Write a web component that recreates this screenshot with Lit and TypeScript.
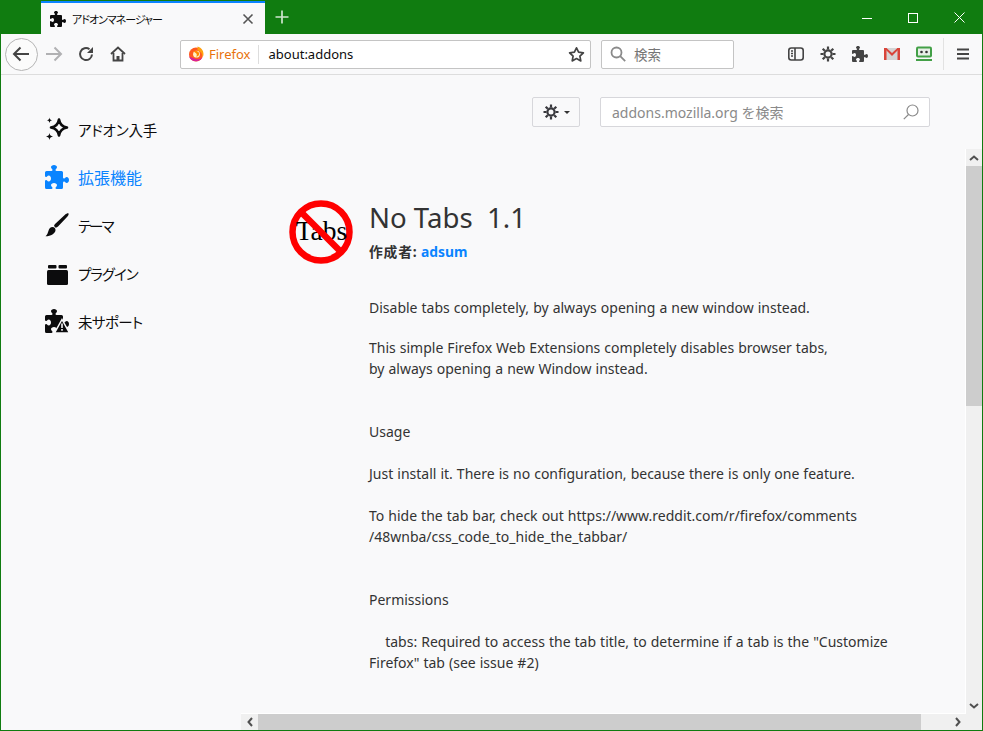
import {LitElement, html, css, svg} from 'lit';
import {customElement} from 'lit/decorators.js';

const PUZZLE =
  'M14.5 8c-.971 0-1 1-1.75 1a.765.765 0 0 1-.75-.75V5a1 1 0 0 0-1-1H7.75A.765.765 0 0 1 7 3.25c0-.75 1-.779 1-1.75C8 .635 7.1 0 6 0S4 .635 4 1.5c0 .971 1 1 1 1.75a.765.765 0 0 1-.75.75H1a1 1 0 0 0-1 1v2.25A.765.765 0 0 0 .75 8c.75 0 .779-1 1.75-1C3.365 7 4 7.9 4 9s-.635 2-1.5 2c-.971 0-1-1-1.75-1a.765.765 0 0 0-.75.75V15a1 1 0 0 0 1 1h3.25a.765.765 0 0 0 .75-.75c0-.75-1-.779-1-1.75C4 12.635 4.9 12 6 12s2 .635 2 1.5c0 .971-1 1-1 1.75a.765.765 0 0 0 .75.75H11a1 1 0 0 0 1-1v-3.25a.765.765 0 0 1 .75-.75c.75 0 .779 1 1.75 1 .865 0 1.5-.9 1.5-2s-.635-2-1.5-2z';

const puzzle = (size: number, color: string) => html`
  <svg width=${size} height=${size} viewBox="0 0 16 16"><path d=${PUZZLE} fill=${color}></path></svg>
`;

// eight tooth gear, used in the toolbar and on the tools button
const gear = (size: number, color: string) => html`
  <svg width=${size} height=${size} viewBox="0 0 16 16" fill="none" stroke=${color}>
    <circle cx="8" cy="8" r="3.6" stroke-width="2.2"></circle>
    <path stroke-width="2.2" d="M8 .5v3M8 12.500v3M.5 8h3M12.500 8h3M2.700 2.700l2.100 2.100M11.200 11.200l2.100 2.100M13.300 2.700l-2.100 2.100M4.800 11.200l-2.100 2.100"></path>
  </svg>
`;

const DESCRIPTION = `This simple Firefox Web Extensions completely disables browser tabs,
by always opening a new Window instead.


Usage

Just install it. There is no configuration, because there is only one feature.

To hide the tab bar, check out https://www.reddit.com/r/firefox/comments
/48wnba/css_code_to_hide_the_tabbar/


Permissions

    tabs: Required to access the tab title, to determine if a tab is the "Customize
Firefox" tab (see issue #2)`;

// squeeze: the kana of the reference font are narrower than Noto's, tracking per label
const NAV = [
  {
    label: 'アドオン入手',
    kana: true,
    squeeze: -0.2,
    icon: html`<svg width="24" height="24" viewBox="0 0 24 24">
      <path fill="none" stroke="#0c0c0d" stroke-width="2.600" stroke-linejoin="round" d="M14 2.500c.8 5 3 7.200 8 8-5 .8-7.200 3-8 8-.8-5-3-7.200-8-8 5-.8 7.200-3 8-8z"></path>
      <path fill="#0c0c0d" d="M4.500.5c.3 1.800 1 2.500 2.800 2.800-1.800.3-2.500 1-2.800 2.800-.3-1.800-1-2.500-2.800-2.800C3.500 3 4.200 2.300 4.500.5zM4.500 16c.4 2.200 1.300 3.100 3.500 3.500-2.200.4-3.100 1.300-3.500 3.500-.4-2.200-1.300-3.100-3.500-3.500 2.200-.4 3.100-1.300 3.500-3.500z"></path>
    </svg>`,
  },
  {label: '拡張機能', active: true, squeeze: 0, icon: puzzle(24, '#0a84ff')},
  {
    label: 'テーマ',
    kana: true,
    squeeze: -2,
    icon: html`<svg width="24" height="24" viewBox="0 0 24 24" fill="#0c0c0d">
      <path d="M23.500.5c.5.5-.2 2-1.500 3.500l-9 9.500c-.7.7-1.500 1.100-2.300 1.300L9 13c.2-.9.600-1.700 1.300-2.300L20 1.800C21.500.5 23 0 23.500.5z"></path>
      <path d="M7.500 14c2 0 3.200 1.300 3 3.200-.3 3.300-4.500 6-10 6 2-1.500 2.200-3.200 3-5.500.6-2 2-3.700 4-3.700z"></path>
    </svg>`,
  },
  {
    label: 'プラグイン',
    kana: true,
    squeeze: -1,
    icon: html`<svg width="24" height="24" viewBox="0 0 24 24" fill="#0c0c0d">
      <rect x="2" y="9" width="21" height="15" rx="1.500"></rect>
      <rect x="3" y="4" width="8.500" height="3.500" rx="1"></rect>
      <rect x="13.500" y="4" width="8.500" height="3.500" rx="1"></rect>
    </svg>`,
  },
  {
    label: '未サポート',
    kana: true,
    squeeze: -0.6,
    icon: html`<svg width="24" height="24" viewBox="0 0 24 24">
      <path fill="#0c0c0d" transform="scale(1.500)" d=${PUZZLE}></path>
      <path fill="#0c0c0d" stroke="#f9f9fa" stroke-width="1.500" d="M17 10.500l7.500 13.500h-15z"></path>
      <path fill="#f9f9fa" d="M16.200 14.500h1.600v4.500h-1.600zM16.200 20h1.600v1.800h-1.600z"></path>
    </svg>`,
  },
];

@customElement('app-root')
export class AppRoot extends LitElement {
  static override styles = css`
    :host {
      display: flex;
      flex-direction: column;
      box-sizing: border-box;
      width: 983px;
      height: 731px;
      overflow: hidden;
      background: #f9f9fa;
      border: 1px solid #107c10;
      border-top: 0;
      font-family: "Noto Sans", "Noto Sans CJK JP", sans-serif;
      color: #333;
    }

    /* title bar */
    .titlebar {
      display: flex;
      flex: none;
      height: 34px;
      padding-left: 40px;
      background: #107c10;
    }
    .tab {
      display: flex;
      align-items: center;
      box-sizing: border-box;
      width: 224px;
      margin-top: 1px;
      padding: 0 11px 0 9px;
      gap: 6px;
      background: #f9f9fa;
      border-top: 2px solid #0a84ff;
      font-size: 11px;
      letter-spacing: -1px;
      font-feature-settings: "palt";
      color: #0c0c0d;
    }
    .tab-title {
      flex: 1;
    }
    .newtab {
      display: flex;
      align-items: center;
      justify-content: center;
      width: 34px;
    }
    .spacer {
      flex: 1;
    }
    .winbtn {
      display: flex;
      align-items: center;
      justify-content: center;
      width: 46px;
      height: 35px;
    }

    /* toolbar */
    .toolbar {
      display: flex;
      flex: none;
      align-items: center;
      box-sizing: border-box;
      height: 41px;
      padding-left: 4px;
      background: #f9f9fa;
      border-bottom: 1px solid #ddd;
    }
    .back {
      display: flex;
      align-items: center;
      justify-content: center;
      box-sizing: border-box;
      width: 33px;
      height: 33px;
      padding-right: 2px;
      border: 1px solid #b5b5b5;
      border-radius: 50%;
      background: #fbfbfb;
    }
    .tool {
      display: flex;
      align-items: center;
      justify-content: center;
      flex: none;
      width: 32px;
      height: 32px;
    }
    .urlbar {
      display: flex;
      align-items: center;
      box-sizing: border-box;
      width: 411px;
      height: 29px;
      margin-left: 46px;
      padding-left: 7px;
      background: #fff;
      border: 1px solid #c4c4c4;
      border-radius: 2px;
      font-size: 13px;
      color: #0c0c0d;
    }
    .identity {
      display: flex;
      align-items: center;
      gap: 5px;
      height: 19px;
      padding-right: 7px;
      margin-right: 10px;
      border-right: 1px solid #ddd;
      color: #e8720c;
      font-size: 13px;
    }
    .url {
      flex: 1;
    }
    .star {
      display: flex;
      margin-right: 5px;
    }
    .searchbar {
      display: flex;
      align-items: center;
      box-sizing: border-box;
      width: 133px;
      height: 29px;
      margin-left: 10px;
      padding-left: 8px;
      gap: 8px;
      background: #fff;
      border: 1px solid #c4c4c4;
      border-radius: 2px;
      font-size: 13.5px;
      color: #757575;
    }
    .tools {
      display: flex;
      margin-left: 46px;
    }
    .sep {
      width: 1px;
      height: 32px;
      margin: 0 3px 0 3px;
      background: #e2e2e2;
    }

    /* page */
    .page {
      display: flex;
      flex: 1;
      min-height: 0;
    }
    .sidebar {
      flex: none;
      box-sizing: border-box;
      width: 240px;
      padding: 30px 0 0 44px;
    }
    .nav {
      display: flex;
      align-items: center;
      height: 48px;
      gap: 9px;
      font-size: 16px;
      font-feature-settings: "palt";
      color: #0c0c0d;
    }
    .nav.kana {
      font-size: 14.5px;
    }
    .nav.active {
      color: #0a84ff;
    }
    .main {
      display: flex;
      flex: 1;
      flex-direction: column;
      min-width: 0;
    }
    .header {
      display: flex;
      flex: none;
      box-sizing: border-box;
      height: 74px;
      padding: 22px 0 0 291px;
      gap: 20px;
    }
    .gearbtn {
      display: flex;
      align-items: center;
      justify-content: center;
      box-sizing: border-box;
      width: 48px;
      height: 30px;
      gap: 5px;
      border: 1px solid #d7d7db;
      border-radius: 2px;
    }
    .caret {
      width: 0;
      height: 0;
      border: 3px solid transparent;
      border-top-color: #333;
      border-bottom: 0;
    }
    .amo {
      display: flex;
      align-items: center;
      justify-content: space-between;
      box-sizing: border-box;
      width: 330px;
      height: 30px;
      padding: 0 10px 1px 11px;
      background: #fff;
      border: 1px solid #d7d7db;
      border-radius: 2px;
      font-size: 14px;
      color: #8a8a8a;
    }
    .pane {
      display: grid;
      flex: 1;
      min-height: 0;
      grid-template-columns: 1fr 16px;
      grid-template-rows: 1fr 16px;
    }
    .content {
      overflow: hidden;
      padding: 51px 0 0 48px;
      border-right: 1px solid #fff;
      border-bottom: 1px solid #fff;
    }
    .head {
      display: flex;
      gap: 16px;
    }
    .title {
      margin: 0;
      font-size: 27.6px;
      font-weight: 400;
      line-height: 34px;
      white-space: pre;
    }
    .author {
      margin-top: 8px;
      font-size: 13.8px;
      font-weight: 700;
      line-height: 20px;
    }
    .author span {
      letter-spacing: .8px;
    }
    .author a {
      color: #0a84ff;
      text-decoration: none;
    }
    .summary {
      margin: 33px 0 0 80px;
      font-size: 14px;
      word-spacing: .4px;
      line-height: 21px;
    }
    .desc {
      margin: 19px 0 0 80px;
      font-size: 14px;
      word-spacing: .4px;
      line-height: 21px;
      white-space: pre-wrap;
    }

    /* scrollbars */
    .vbar {
      display: flex;
      flex-direction: column;
      background: #f0f0f0;
    }
    .hbar {
      display: flex;
      background: #f0f0f0;
    }
    .corner {
      background: #f0f0f0;
    }
    .arrow {
      display: flex;
      flex: none;
      align-items: center;
      justify-content: center;
    }
    .vbar .arrow {
      height: 17px;
    }
    .hbar .arrow {
      width: 17px;
    }
    .vthumb {
      flex: none;
      height: 240px;
      background: #cdcdcd;
    }
    .hthumb {
      flex: none;
      width: 663px;
      background: #cdcdcd;
    }
    .grow {
      flex: 1;
    }
  `;

  private renderTitlebar() {
    return html`
      <div class="titlebar">
        <div class="tab">
          ${puzzle(16, '#0c0c0d')}
          <span class="tab-title">アドオンマネージャー</span>
          <svg width="12" height="12" viewBox="0 0 12 12"><path d="M1.500 1.500l9 9M10.500 1.500l-9 9" stroke="#555" stroke-width="1.600" fill="none"></path></svg>
        </div>
        <div class="newtab">
          <svg width="14" height="14" viewBox="0 0 14 14"><path d="M7 .5v13M.5 7h13" stroke="#cfe5cf" stroke-width="1.700" fill="none"></path></svg>
        </div>
        <div class="spacer"></div>
        <div class="winbtn"><svg width="10" height="10" viewBox="0 0 10 10"><path d="M0 5.500h10" stroke="#fff" fill="none"></path></svg></div>
        <div class="winbtn"><svg width="10" height="10" viewBox="0 0 10 10"><rect x=".5" y=".5" width="9" height="9" stroke="#fff" fill="none"></rect></svg></div>
        <div class="winbtn"><svg width="11" height="11" viewBox="0 0 11 11"><path d="M.5.500l10 10M10.500.500l-10 10" stroke="#fff" fill="none"></path></svg></div>
      </div>
    `;
  }

  private renderToolbar() {
    return html`
      <div class="toolbar">
        <div class="back">
          <svg width="18" height="16" viewBox="0 0 18 16" fill="none" stroke="#444" stroke-width="2"><path d="M17 8H2M8.500 1.500L2 8l6.500 6.500"></path></svg>
        </div>
        <div class="tool">
          <svg width="18" height="16" viewBox="0 0 18 16" fill="none" stroke="#b1b1b3" stroke-width="2"><path d="M1 8h15M9.500 1.500L16 8l-6.500 6.500"></path></svg>
        </div>
        <div class="tool">
          <svg width="16" height="16" viewBox="0 0 16 16" fill="none"><path d="M14 8.500A6 6 0 1 1 11.500 3.200" stroke="#444" stroke-width="2"></path><path d="M15 1v6H9z" fill="#444"></path></svg>
        </div>
        <div class="tool">
          <svg width="16" height="16" viewBox="0 0 16 16" fill="none" stroke="#444" stroke-width="1.800"><path d="M1 8l7-6.500L15 8"></path><path d="M3.500 7v7.500h9V7"></path><rect x="6.500" y="10" width="3" height="5" fill="#444" stroke="none"></rect></svg>
        </div>
        <div class="urlbar">
          <div class="identity">
            <svg width="16" height="16" viewBox="0 0 16 16">
              <circle cx="8" cy="8.500" r="7" fill="#ff5a1f"></circle>
              <path d="M9.500.5c3.500 1 6 3.700 6 7.500 0 1.200-.3 2.300-.8 3.300C14.500 8 12.500 5 9.500 4.500z" fill="#ffa00e"></path>
              <path d="M1 10.500c1.300 3.500 5 5.700 9 4.500 2.200-.7 3.800-2.200 4.600-4-2.200 2.200-5.400 2.800-7.600 1.700z" fill="#d6219a"></path>
              <circle cx="8.500" cy="8.200" r="3.400" fill="#fff3c4"></circle>
              <path d="M5.500 5.500C7.500 4.500 10 5 11 7c.7 2-1 3.800-3 3.500 1.500-1 1.200-3.200-2.500-5z" fill="#ff8a00"></path>
            </svg>
            <span>Firefox</span>
          </div>
          <span class="url">about:addons</span>
          <span class="star">
            <svg width="17" height="17" viewBox="0 0 17 17"><path d="M8.500 1.800l2.100 4.400 4.800.6-3.500 3.300.9 4.800-4.300-2.300-4.300 2.300.9-4.800L1.600 6.800l4.800-.6z" fill="none" stroke="#444" stroke-width="1.700" stroke-linejoin="round"></path></svg>
          </span>
        </div>
        <div class="searchbar">
          <svg width="16" height="16" viewBox="0 0 16 16" fill="none" stroke="#8a8a8a" stroke-width="1.800"><circle cx="6.500" cy="6.500" r="5"></circle><path d="M10.200 10.200l5 5"></path></svg>
          <span>検索</span>
        </div>
        <div class="tools">
          <div class="tool">
            <svg width="16" height="14" viewBox="0 0 16 14" fill="none" stroke="#444" stroke-width="1.600"><rect x=".8" y="1" width="14.400" height="12" rx="2.500"></rect><path d="M7 1v12M3 4h2M3 6.500h2M3 9h2"></path></svg>
          </div>
          <div class="tool">${gear(16, '#444')}</div>
          <div class="tool">${puzzle(16, '#444')}</div>
          <div class="tool">
            <svg width="16" height="14" viewBox="0 0 16 14"><rect y="1" width="16" height="12" fill="#d5d5d5"></rect><path d="M0 1h2.500L8 6l5.500-5H16L8 9z" fill="#d9453a"></path><path d="M0 1h2.500v12H0zM13.500 1H16v12h-2.500z" fill="#d9453a"></path></svg>
          </div>
          <div class="tool">
            <svg width="16" height="16" viewBox="0 0 16 16"><rect y=".5" width="16" height="11" rx="2" fill="#43a047"></rect><rect x="2" y="2.500" width="12" height="7" fill="#e7efe7"></rect><circle cx="5.500" cy="6" r="1.300" fill="#333"></circle><circle cx="10.500" cy="6" r="1.300" fill="#333"></circle><rect y="13" width="16" height="2" fill="#43a047"></rect></svg>
          </div>
        </div>
        <div class="sep"></div>
        <div class="tool">
          <svg width="12" height="12" viewBox="0 0 12 12"><path d="M0 1.500h12M0 6h12M0 10.500h12" stroke="#444" stroke-width="1.800" fill="none"></path></svg>
        </div>
      </div>
    `;
  }

  private renderHead() {
    return html`
      <div class="head">
        <svg width="64" height="64" viewBox="0 0 64 64">
          <circle cx="32" cy="32" r="28.500" fill="none" stroke="#f00" stroke-width="6.500"></circle>
          ${svg`<text x="32.500" y="39.500" text-anchor="middle" font-family="Liberation Serif, serif" font-size="27.500" fill="#000">Tabs</text>`}
          <path d="M12 12l40 40" stroke="#f00" stroke-width="6.500" fill="none"></path>
        </svg>
        <div>
          <h1 class="title">No Tabs  1.1</h1>
          <div class="author"><span>作成者:</span> <a>adsum</a></div>
        </div>
      </div>
    `;
  }

  override render() {
    return html`
      ${this.renderTitlebar()} ${this.renderToolbar()}
      <div class="page">
        <div class="sidebar">
          ${NAV.map(
            (n) => html`<div class="nav ${n.active ? 'active' : ''} ${n.kana ? 'kana' : ''}">${n.icon}<span style="letter-spacing:${n.squeeze}px">${n.label}</span></div>`
          )}
        </div>
        <div class="main">
          <div class="header">
            <div class="gearbtn">${gear(16, '#38383d')}<span class="caret"></span></div>
            <div class="amo">
              <span>addons.mozilla.org を検索</span>
              <svg width="16" height="16" viewBox="0 0 16 16" fill="none" stroke="#8a8a8a" stroke-width="1.200"><circle cx="9.500" cy="6.500" r="5.500"></circle><path d="M5.500 10.500L.8 15.200"></path></svg>
            </div>
          </div>
          <div class="pane">
            <div class="content">
              ${this.renderHead()}
              <div class="summary">Disable tabs completely, by always opening a new window instead.</div>
              <div class="desc">${DESCRIPTION}</div>
            </div>
            <div class="vbar">
              <div class="arrow"><svg width="10" height="6" viewBox="0 0 10 6"><path d="M1 5l4-3.500L9 5" stroke="#505050" stroke-width="2" fill="none"></path></svg></div>
              <div class="vthumb"></div>
              <div class="grow"></div>
              <div class="arrow"><svg width="10" height="6" viewBox="0 0 10 6"><path d="M1 1l4 3.500L9 1" stroke="#505050" stroke-width="2" fill="none"></path></svg></div>
            </div>
            <div class="hbar">
              <div class="arrow"><svg width="6" height="10" viewBox="0 0 6 10"><path d="M5 1L1.500 5 5 9" stroke="#505050" stroke-width="2" fill="none"></path></svg></div>
              <div class="hthumb"></div>
              <div class="grow"></div>
              <div class="arrow"><svg width="6" height="10" viewBox="0 0 6 10"><path d="M1 1l3.500 4L1 9" stroke="#505050" stroke-width="2" fill="none"></path></svg></div>
            </div>
            <div class="corner"></div>
          </div>
        </div>
      </div>
    `;
  }
}

declare global {
  interface HTMLElementTagNameMap {
    'app-root': AppRoot;
  }
}
